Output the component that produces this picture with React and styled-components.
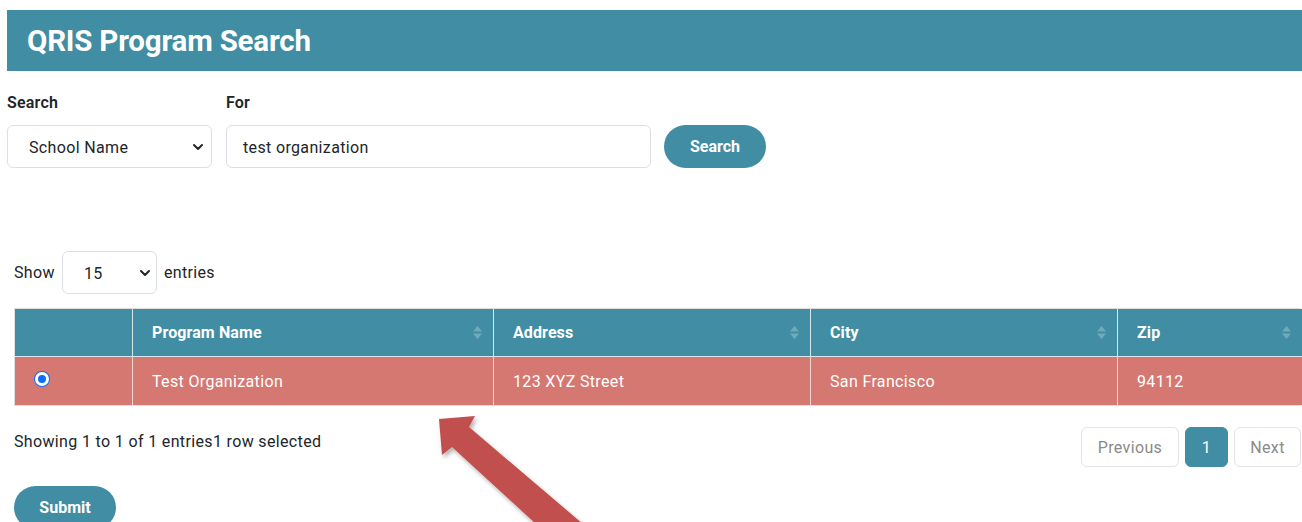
import React from "react";
import styled, { createGlobalStyle } from "styled-components";

const teal = "#418da3";
const rowRed = "#d67872";

const GlobalStyle = createGlobalStyle`
  body {
    margin: 0;
    font-family: Roboto, "Liberation Sans", Arial, sans-serif;
    color: #212529;
    background: #fff;
    overflow: hidden;
    letter-spacing: 0.35px;
  }
`;

const Page = styled.div`
  position: relative;
  width: 1302px;
  height: 522px;
  padding: 10px 0 0 7px;
  box-sizing: border-box;
  overflow: hidden;
`;

const Banner = styled.div`
  height: 61px;
  background: ${teal};
  display: flex;
  align-items: center;
  padding-left: 20px;
  padding-top: 1px;
  box-sizing: border-box;
  color: #fff;
  font-size: 29.5px;
  font-weight: 700;
  letter-spacing: -0.2px;
`;

const SearchForm = styled.div`
  display: flex;
  align-items: flex-end;
  margin-top: 22px;
`;

const Field = styled.div`
  display: flex;
  flex-direction: column;
  gap: 12px;
  margin-right: ${({ $gap }) => $gap}px;
`;

const Label = styled.div`
  font-size: 16px;
  font-weight: 600;
  line-height: 20px;
  color: #212529;
  letter-spacing: 0.2px;
`;

const SelectBox = styled.div`
  width: ${({ $w }) => $w}px;
  height: 43px;
  box-sizing: border-box;
  border: 1px solid #dcdfe5;
  border-radius: 6px;
  display: flex;
  align-items: center;
  justify-content: space-between;
  padding: 1px ${({ $pr }) => $pr}px 0 21px;
  font-size: 16px;
  color: #212529;
  background: #fff;
`;

const TextInput = styled.div`
  width: 425px;
  height: 43px;
  box-sizing: border-box;
  border: 1px solid #dcdfe5;
  border-radius: 6px;
  display: flex;
  align-items: center;
  padding: 1px 0 0 16px;
  font-size: 16px;
  color: #212529;
`;

const PillButton = styled.button`
  width: 102px;
  height: 43px;
  border: none;
  border-radius: 22px;
  background: ${teal};
  color: #fff;
  font-family: inherit;
  font-size: 16px;
  font-weight: 700;
  letter-spacing: 0;
  padding: 0;
`;

const Results = styled.div`
  margin: 83px 1px 0 7px;
`;

const LengthRow = styled.div`
  display: flex;
  align-items: center;
  gap: 7px;
  font-size: 16px;
  color: #212529;
`;

const Table = styled.div`
  margin-top: 14px;
  display: grid;
  grid-template-columns: 117px 361px 317px 307px 185px;
  border: 1px solid #dedede;
  box-sizing: border-box;
`;

const HeadCell = styled.div`
  height: 47px;
  background: ${teal};
  color: #fff;
  font-size: 16px;
  font-weight: 700;
  letter-spacing: 0.1px;
  display: flex;
  align-items: center;
  justify-content: space-between;
  padding: 0 10px 0 19px;
  border-left: ${({ $first }) => ($first ? "none" : "1px solid #d9e6ea")};
  border-bottom: 1px solid #d9e6ea;
`;

const BodyCell = styled.div`
  height: 48px;
  background: ${rowRed};
  color: #fff;
  font-size: 16px;
  display: flex;
  align-items: center;
  padding-left: ${({ $first }) => ($first ? "20px" : "19px")};
  border-left: ${({ $first }) => ($first ? "none" : "1px solid #eed6d4")};
`;

const Radio = styled.span`
  width: 14px;
  height: 14px;
  border-radius: 50%;
  background: #0d6efd;
  box-sizing: border-box;
  border: 3px solid #fff;
  box-shadow: 0 0 0 1px #0d6efd;
  margin-top: -4px;
`;

const Footer = styled.div`
  display: flex;
  justify-content: space-between;
  align-items: flex-start;
  margin-top: 21px;
`;

const Info = styled.div`
  font-size: 16px;
  color: #212529;
  margin-top: 5px;
`;

const Pager = styled.div`
  display: flex;
  gap: 6px;
`;

const PageButton = styled.div`
  height: 40px;
  min-width: ${({ $w }) => $w}px;
  box-sizing: border-box;
  border-radius: 6px;
  border: 1px solid ${({ $active }) => ($active ? teal : "#e3e3e3")};
  background: ${({ $active }) => ($active ? teal : "#fff")};
  color: ${({ $active }) => ($active ? "#fff" : "#8a8a8a")};
  font-size: 16px;
  display: flex;
  align-items: center;
  justify-content: center;
`;

const SubmitRow = styled.div`
  margin-top: 19px;
`;

const ArrowLayer = styled.svg`
  position: absolute;
  left: 0;
  top: 0;
  pointer-events: none;
`;

const Chevron = ({ size = 12 }) => (
  <svg width={size} height={size} viewBox="0 0 12 12">
    <path d="M2 4l4 4 4-4" fill="none" stroke="#212529" strokeWidth="2" strokeLinecap="round" strokeLinejoin="round" />
  </svg>
);

const SortIcon = () => (
  <svg width="11" height="17" viewBox="0 0 11 17">
    <path d="M5.5 2l4.5 5.5H1z M5.5 15l4.5-5.5H1z" fill="rgba(255,255,255,0.25)" />
  </svg>
);

const columns = ["", "Program Name", "Address", "City", "Zip"];
const row = ["Test Organization", "123 XYZ Street", "San Francisco", "94112"];

export default function App() {
  return (
    <Page>
      <GlobalStyle />
      <Banner>QRIS Program Search</Banner>

      <SearchForm>
        <Field $gap={14}>
          <Label>Search</Label>
          <SelectBox $w={205} $pr={7}>
            <span>School Name</span>
            <Chevron />
          </SelectBox>
        </Field>
        <Field $gap={13}>
          <Label>For</Label>
          <TextInput>test organization</TextInput>
        </Field>
        <PillButton>Search</PillButton>
      </SearchForm>

      <Results>
        <LengthRow>
          Show
          <SelectBox $w={95} $pr={5}>
            <span>15</span>
            <Chevron />
          </SelectBox>
          entries
        </LengthRow>

        <Table>
          {columns.map((c, i) => (
            <HeadCell key={i} $first={i === 0}>
              <span>{c}</span>
              {i > 0 && <SortIcon />}
            </HeadCell>
          ))}
          <BodyCell $first>
            <Radio />
          </BodyCell>
          {row.map((v) => (
            <BodyCell key={v}>{v}</BodyCell>
          ))}
        </Table>

        <Footer>
          <Info>Showing 1 to 1 of 1 entries1 row selected</Info>
          <Pager>
            <PageButton $w={98}>Previous</PageButton>
            <PageButton $w={43} $active>1</PageButton>
            <PageButton $w={67}>Next</PageButton>
          </Pager>
        </Footer>

        <SubmitRow>
          <PillButton>Submit</PillButton>
        </SubmitRow>
      </Results>

      <ArrowLayer width="1302" height="522" viewBox="0 0 1302 522">
        <defs>
          <filter id="arrowShadow" x="-20%" y="-20%" width="140%" height="140%">
            <feDropShadow dx="2" dy="3" stdDeviation="2" floodColor="#000" floodOpacity="0.3" />
          </filter>
        </defs>
        <polygon
          points="439,419 475,416 469,427 583,524 536,524 452,447 442,455"
          fill="#c0504d"
          filter="url(#arrowShadow)"
        />
      </ArrowLayer>
    </Page>
  );
}
